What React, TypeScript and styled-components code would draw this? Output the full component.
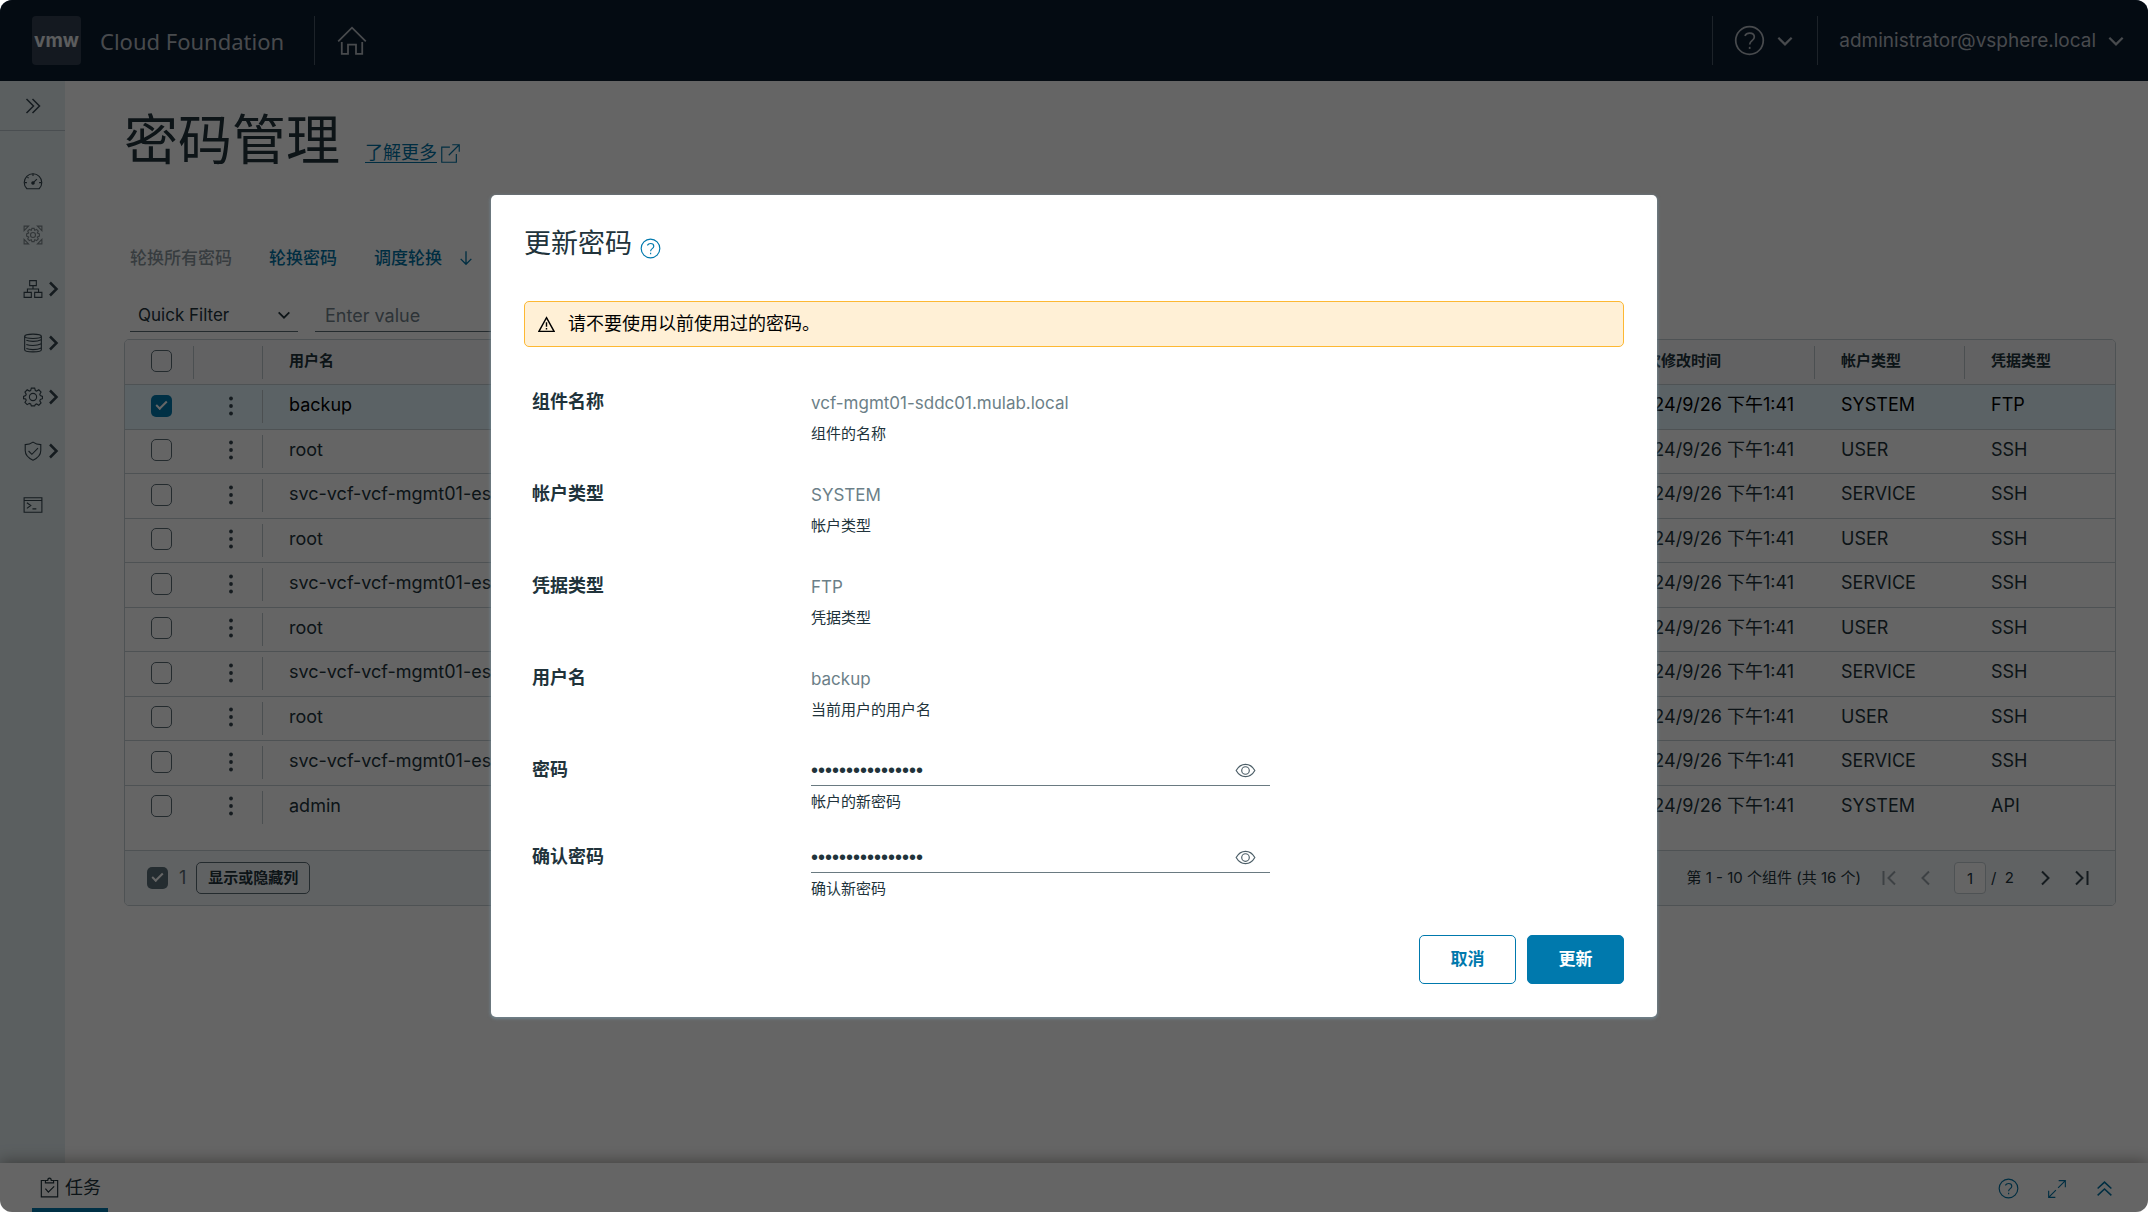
import React from 'react';
import styled, { createGlobalStyle, css } from 'styled-components';

const GlobalStyle = createGlobalStyle`
  *, *::before, *::after { box-sizing: border-box; }
  body {
    margin: 0;
    background: #ffffff;
    color: #21333b;
    font-family: Inter, 'Noto Sans CJK SC', sans-serif;
    font-size: 18px;
    line-height: 24px;
  }
  button, input, select { font: inherit; color: inherit; margin: 0; }
  button { cursor: pointer; }
  h1, h2, p { margin: 0; font-weight: 400; }
`;

/* ---------- icons ---------- */

const Svg = styled.svg<{ $size: number }>`
  display: block;
  flex: none;
  width: ${(p) => p.$size}px;
  height: ${(p) => p.$size}px;
  fill: none;
  stroke: currentColor;
`;

const shapes = {
  home: (
    <>
      <path d="M2.5 18.5 18 3l15.5 15.5" />
      <path d="M6.5 19v13.5h7V22h9v10.5h7V19" />
    </>
  ),
  help: (
    <>
      <circle cx="18" cy="18" r="16" />
      <path d="M12.6 12.6c1.2-2.2 3.2-3.2 5.6-3.2 3.2 0 5.4 1.9 5.4 4.6 0 4.2-5.4 4.2-5.4 8.6" />
      <path d="M18.2 25.4v2.4" />
    </>
  ),
  down: <path d="M6 12l12 12 12-12" />,
  right: <path d="M12 5l13 13-13 13" />,
  left: <path d="M24 5 11 18l13 13" />,
  first: <path d="M30 5 17 18l13 13M7 4v28" />,
  last: <path d="M6 5l13 13L6 31M29 4v28" />,
  doubleRight: <path d="M5 4l14 14L5 32M17 4l14 14-14 14" />,
  doubleUp: <path d="M5 18 18 6l13 12M5 31l13-12 13 12" />,
  arrowDown: <path d="M18 3v29M6 20l12 12 12-12" />,
  external: <path d="M17 7H3v26h25V19M21 3h12v12M33 3 15 21" />,
  expand: <path d="M21 3h12v12M33 3 20 16M15 33H3V21M3 33l13-13" />,
  gauge: (
    <>
      <path d="M7 32h22c3.200-3 4.800-7 4.800-11.200A15.800 15.800 0 0 0 2.200 20.800C2.200 25 3.800 29 7 32z" />
      <circle cx="18" cy="21.500" r="2.200" fill="currentColor" />
      <path d="M18 21.500l7-7M18 5v4M3 21h4M29 21h4M8 11l2 2" />
    </>
  ),
  target: (
    <>
      <path d="M2 10V2h8zM26 2h8v8zM34 26v8h-8zM10 34H2v-8z" />
      <path d="M16 6h4l1 3.500 3.500-1.500 3 3-1.700 3.300 3.700 1.700v4l-3.700 1.500L27.500 25l-3 3-3.500-1.600L20 30h-4l-1-3.600L11.500 28l-3-3 1.700-3.500L6.500 20v-4l3.700-1.700L8.500 11l3-3L15 9.500z" />
      <circle cx="18" cy="18" r="4.500" />
    </>
  ),
  network: (
    <path d="M12 3h12v9H12zM2 24h13v9H2zM21 24h13v9H21zM18 12v6M8 24v-6h20v6" />
  ),
  database: (
    <>
      <ellipse cx="18" cy="6" rx="15" ry="4" />
      <path d="M3 6v24c0 2.200 6.700 4 15 4s15-1.800 15-4V6" />
      <path d="M6 13c3 1.400 7.200 2 12 2s10-.6 15-3M6 20.500c3 1.400 7.200 2 12 2s10-.6 15-3M6 28c3 1.400 7.200 2 12 2s10-.6 15-3" />
    </>
  ),
  gear: (
    <>
      <path d="M15 2h6l1.200 4.300 2.400 1L28.500 5l4 4-2.300 4 1 2.400L35 17v4l-3.800 1.500-1 2.400 2.300 3.900-4 4-3.900-2.300-2.400 1L21 34h-6l-1.200-3.500-2.400-1-3.900 2.300-4-4 2.300-3.900-1-2.400L1 21v-4l3.800-1.600 1-2.400-2.300-4 4-4 3.900 2.300 2.400-1z" />
      <circle cx="18" cy="18" r="6.500" />
    </>
  ),
  shield: (
    <>
      <path d="M18 2c4 3 9 4.500 14 4.500V17c0 8-5.500 13.500-14 17.500C9.500 30.500 4 25 4 17V6.500C9 6.500 14 5 18 2z" />
      <path d="M10 18l6 6 11-11" />
    </>
  ),
  terminal: (
    <path d="M2 5h32v26H2zM2 10h32M7 14l7 5-7 5M17 25h7" />
  ),
  warning: (
    <>
      <path d="M18 3.500 34 32.500H2z" />
      <path d="M18 13v10M18 25.500v3" />
    </>
  ),
  eye: (
    <>
      <path d="M2 18C6 11 12 7.500 18 7.500S30 11 34 18c-4 7-10 10.500-16 10.500S6 25 2 18z" />
      <circle cx="18" cy="18" r="6.500" />
    </>
  ),
  clipboard: (
    <>
      <path d="M10 6H4v28h28V6h-6" />
      <path d="M11 10V6h4c0-2 1-4 3-4s3 2 3 4h4v4z" />
      <path d="M11 20l5 6 10-10" />
    </>
  ),
  dots: (
    <g fill="currentColor" stroke="none">
      <circle cx="18" cy="4.500" r="3.400" />
      <circle cx="18" cy="18" r="3.400" />
      <circle cx="18" cy="31.500" r="3.400" />
    </g>
  ),
};

type IconName = keyof typeof shapes;

function Icon({ name, size = 20, weight = 2 }: { name: IconName; size?: number; weight?: number }) {
  return (
    <Svg $size={size} viewBox="0 0 36 36" strokeWidth={weight} aria-hidden="true">
      {shapes[name]}
    </Svg>
  );
}

/* ---------- frame ---------- */

const Frame = styled.div`
  position: relative;
  display: flex;
  flex-direction: column;
  min-height: 100vh;
  overflow: hidden;
  border-radius: 12px;
  background: #fdfdfd;
`;

const PlainButton = styled.button`
  display: flex;
  align-items: center;
  padding: 0;
  border: 0;
  background: none;
`;

const Header = styled.header`
  display: flex;
  align-items: center;
  height: 81px;
  padding: 0 22px 0 32px;
  background: #0a1c2f;
  color: #c4c8cc;
`;

const Logo = styled.span`
  display: flex;
  align-items: center;
  justify-content: center;
  width: 49px;
  height: 49px;
  border-radius: 4px;
  background: #323f50;
  color: #e6e8ea;
  font-size: 19px;
  font-weight: 700;
`;

const Product = styled.span`
  margin: 0 30px 0 19px;
  font-family: 'Noto Sans', sans-serif;
  font-size: 22px;
  line-height: 32px;
  color: #b4bac0;
`;

const HeaderGroup = styled.div<{ $end?: number }>`
  display: flex;
  align-items: center;
  height: 49px;
  padding: 0 ${(p) => p.$end || 0}px 0 21px;
  border-left: 1px solid #4a5868;
`;

const Spacer = styled.div`
  flex: 1;
`;

const HeaderButton = styled(PlainButton)`
  gap: 10px;
  font-size: 19px;
  color: #b4bac0;
`;

const Body = styled.div`
  display: flex;
  flex: 1;
`;

const Sidebar = styled.nav`
  width: 65px;
  flex: none;
  background: #e3edf0;
  color: #35454e;
`;

const Toggle = styled(PlainButton)`
  justify-content: center;
  width: 100%;
  height: 50px;
  margin-bottom: 23px;
  border-bottom: 1px solid #b8c4ca;
`;

const NavItem = styled(PlainButton)<{ $muted?: boolean }>`
  gap: 1px;
  width: 100%;
  height: 54px;
  padding-left: 23px;
  color: ${(p) => (p.$muted ? '#7d878c' : '#35454e')};
`;

const Main = styled.main`
  flex: 1;
  min-width: 0;
  padding: 28px 32px 24px 59px;
`;

const TitleRow = styled.div`
  display: flex;
  align-items: flex-end;
  gap: 25px;
  height: 64px;
`;

const Title = styled.h1`
  font-size: 54px;
  line-height: 64px;
`;

const LearnMore = styled.a`
  display: flex;
  align-items: center;
  gap: 3px;
  margin-bottom: 8px;
  color: #0072a3;
  text-underline-offset: 3px;
`;

const Actions = styled.div`
  display: flex;
  align-items: center;
  gap: 37px;
  height: 34px;
  margin: 68px 0 24px 6px;
`;

const Action = styled(PlainButton)`
  gap: 16px;
  font-size: 17px;
  font-weight: 500;
  color: #0072a3;
  &:disabled { color: #8b979d; }
`;

const Filters = styled.div`
  display: flex;
  gap: 17px;
  margin: 0 0 7px 6px;
`;

const controlLine = css`
  height: 33px;
  border: 0;
  border-bottom: 1px solid #5b6b74;
  border-radius: 0;
  background: transparent;
  outline: 0;
`;

const SelectWrap = styled.span`
  display: grid;
  grid-template-columns: 1fr 22px;
  align-items: center;
  width: 168px;
  ${controlLine}
  & > select { grid-area: 1 / 1 / 2 / 3; }
  & > svg { grid-area: 1 / 2; pointer-events: none; }
`;

const FilterSelect = styled.select`
  width: 100%;
  height: 32px;
  padding: 0 8px;
  border: 0;
  background: transparent;
  appearance: none;
  outline: 0;
  font-size: 17px;
`;

const FilterInput = styled.input`
  ${controlLine}
  width: 260px;
  padding: 0 10px;
  &::placeholder { color: #71808a; opacity: 1; }
`;

/* ---------- data grid ---------- */

const Grid = styled.section`
  border: 1px solid #c3ccd1;
  border-radius: 5px;
  overflow: hidden;
`;

const Table = styled.table`
  width: 100%;
  height: 489px;
  table-layout: fixed;
  border-collapse: separate;
  border-spacing: 0;
`;

const Col = styled.col<{ $width?: number }>`
  width: ${(p) => (p.$width ? `${p.$width}px` : 'auto')};
`;

const divider = css`
  background-image: linear-gradient(#bcc5ca, #bcc5ca);
  background-size: 1px 33px;
  background-position: right center;
  background-repeat: no-repeat;
`;

const cellBox = css`
  height: 44px;
  padding: 0 0 2px 26px;
  text-align: left;
  white-space: nowrap;
  vertical-align: middle;
`;

const Th = styled.th<{ $divided?: boolean }>`
  ${cellBox}
  background-color: #f4f6f8;
  font-size: 15px;
  font-weight: 700;
  line-height: 20px;
  ${(p) => p.$divided && divider}
`;

const Td = styled.td<{ $divided?: boolean }>`
  ${cellBox}
  border-top: 1px solid #c3ccd1;
  ${(p) => p.$divided && divider}
`;

const TextTd = styled(Td)`
  padding-bottom: 3px;
`;

const Tr = styled.tr<{ $selected?: boolean }>`
  color: ${(p) => (p.$selected ? '#000000' : '#21333b')};
  background: ${(p) => (p.$selected ? '#e3f5fc' : 'transparent')};
`;

const Check = styled.input<{ $tone?: string }>`
  display: block;
  appearance: none;
  width: 21px;
  height: 22px;
  flex: none;
  border: 1px solid #5b6b74;
  border-radius: 5px;
  position: relative;
  &:checked {
    border: 0;
    background: ${(p) => p.$tone || '#0079ad'};
  }
  &:checked::after {
    content: '';
    position: absolute;
    left: 5px;
    top: 6px;
    width: 11px;
    height: 6px;
    border-left: 2px solid #ffffff;
    border-bottom: 2px solid #ffffff;
    transform: rotate(-45deg);
  }
`;

const RowMenu = styled(PlainButton)`
  justify-content: center;
  width: 22px;
  height: 24px;
  color: #35454e;
`;

const GridFooter = styled.footer`
  display: flex;
  align-items: center;
  height: 55px;
  margin-top: 21px;
  padding: 0 24px 0 22px;
  border-top: 1px solid #c3ccd1;
  background: #f1f5f8;
  font-size: 15px;
`;

const Selected = styled.label`
  display: flex;
  align-items: center;
  gap: 11px;
  margin-right: 10px;
  font-size: 18px;
  color: #5b6b74;
`;

const ColumnsButton = styled.button`
  height: 32px;
  padding: 0 11px;
  border: 1px solid #5b6b74;
  border-radius: 5px;
  background: transparent;
  font-weight: 700;
  line-height: 20px;
`;

const Pager = styled.div`
  display: flex;
  align-items: center;
  gap: 19px;
`;

const PageButton = styled(PlainButton)`
  color: #35454e;
  &:disabled { color: #9aa4aa; }
`;

const PageField = styled.label`
  display: flex;
  align-items: center;
  gap: 5px;
  margin-right: 3px;
`;

const PageInput = styled.input`
  width: 32px;
  height: 32px;
  padding: 0;
  border: 1px solid #c3ccd1;
  border-radius: 4px;
  background: #fdfdfd;
  text-align: center;
`;

/* ---------- task bar ---------- */

const TaskBar = styled.footer`
  display: flex;
  align-items: center;
  height: 49px;
  padding: 0 34px 0 32px;
  background: #fdfdfd;
  box-shadow: 0 -2px 14px rgba(40, 30, 20, 0.4);
  color: #0072a3;
`;

const TaskTab = styled(PlainButton)`
  gap: 5px;
  align-self: stretch;
  padding: 0 7px;
  border-top: 4px solid transparent;
  border-bottom: 4px solid #0079ad;
  color: #21333b;
`;

const TaskTools = styled.div`
  display: flex;
  gap: 28px;
  margin-left: auto;
  padding-top: 2px;
  & > button { color: inherit; }
`;

/* ---------- dialog ---------- */

const Backdrop = styled.div`
  position: absolute;
  inset: 0;
  display: flex;
  align-items: center;
  justify-content: center;
  background: rgba(0, 0, 0, 0.6);
`;

const Dialog = styled.form`
  width: 1166px;
  max-width: 92%;
  padding: 31px 33px 33px;
  border-radius: 5px;
  background: #ffffff;
  box-shadow: 0 1px 3px 1px rgba(120, 150, 165, 0.6);
`;

const DialogTitle = styled.div`
  display: flex;
  align-items: center;
  gap: 8px;
  height: 36px;
  & > h2 { font-size: 27px; line-height: 36px; }
  & > button { color: #0079ad; padding-top: 9px; }
`;

const Alert = styled.div`
  display: flex;
  align-items: center;
  gap: 13px;
  height: 46px;
  margin: 39px 0 43px;
  padding: 0 13px;
  border: 1px solid #fdb833;
  border-radius: 5px;
  background: #fff0d6;
  color: #000000;
`;

const Fields = styled.div<{ $gap: number }>`
  display: flex;
  flex-direction: column;
  gap: ${(p) => p.$gap}px;
  margin-bottom: 38px;
`;

const SecretFields = styled(Fields)`
  margin-bottom: 36px;
`;

const Field = styled.div`
  display: grid;
  grid-template-columns: 279px 459px;
  height: 54px;
  padding-left: 8px;
`;

const FieldLabel = styled.label`
  font-weight: 700;
`;

const FieldBody = styled.div`
  display: flex;
  flex-direction: column;
  justify-content: space-between;
`;

const Value = styled.output`
  font-size: 17px;
  line-height: 26px;
  color: #6c7f88;
`;

const Hint = styled.p`
  font-size: 15px;
  line-height: 20px;
`;

const SecretLine = styled.div`
  display: flex;
  align-items: flex-start;
  height: 28px;
  padding-right: 14px;
  border-bottom: 1px solid #6a7a81;
  & > button { height: 24px; color: #4d5f68; }
`;

const SecretInput = styled.input`
  flex: 1;
  height: 24px;
  padding: 0;
  border: 0;
  outline: 0;
  background: transparent;
  font-family: 'Liberation Sans', sans-serif;
  font-size: 20px;
`;

const DialogActions = styled.div`
  display: flex;
  justify-content: flex-end;
  gap: 11px;
`;

const DialogButton = styled.button<{ $primary?: boolean }>`
  width: 97px;
  height: 49px;
  padding: 0 0 2px;
  border: 1px solid #0079ad;
  border-radius: 5px;
  background: ${(p) => (p.$primary ? '#0079ad' : '#ffffff')};
  color: ${(p) => (p.$primary ? '#ffffff' : '#0079ad')};
  font-size: 17px;
  font-weight: 700;
`;

/* ---------- data ---------- */

const nav: { icon: IconName; label: string; more?: boolean; muted?: boolean }[] = [
  { icon: 'gauge', label: 'dashboard' },
  { icon: 'target', label: 'solutions', muted: true },
  { icon: 'network', label: 'inventory', more: true },
  { icon: 'database', label: 'lifecycle', more: true },
  { icon: 'gear', label: 'administration', more: true },
  { icon: 'shield', label: 'security', more: true },
  { icon: 'terminal', label: 'developer center' },
];

const accounts = [
  ['backup', 'SYSTEM', 'FTP'],
  ['root', 'USER', 'SSH'],
  ['svc-vcf-vcf-mgmt01-esxi01', 'SERVICE', 'SSH'],
  ['root', 'USER', 'SSH'],
  ['svc-vcf-vcf-mgmt01-esxi02', 'SERVICE', 'SSH'],
  ['root', 'USER', 'SSH'],
  ['svc-vcf-vcf-mgmt01-esxi03', 'SERVICE', 'SSH'],
  ['root', 'USER', 'SSH'],
  ['svc-vcf-vcf-mgmt01-esxi04', 'SERVICE', 'SSH'],
  ['admin', 'SYSTEM', 'API'],
];

const details = [
  { id: 'component', label: '组件名称', value: 'vcf-mgmt01-sddc01.mulab.local', hint: '组件的名称' },
  { id: 'account', label: '帐户类型', value: 'SYSTEM', hint: '帐户类型' },
  { id: 'credential', label: '凭据类型', value: 'FTP', hint: '凭据类型' },
  { id: 'user', label: '用户名', value: 'backup', hint: '当前用户的用户名' },
];

const secrets = [
  { id: 'password', label: '密码', hint: '帐户的新密码' },
  { id: 'confirm', label: '确认密码', hint: '确认新密码' },
];

function AccountTable() {
  return (
    <Table>
      <colgroup>
        <Col $width={69} />
        <Col $width={69} />
        <Col />
        <Col $width={210} />
        <Col $width={150} />
        <Col $width={150} />
      </colgroup>
      <thead>
        <tr>
          <Th $divided><Check type="checkbox" aria-label="select all" /></Th>
          <Th $divided />
          <Th>用户名</Th>
          <Th $divided>上次修改时间</Th>
          <Th $divided>帐户类型</Th>
          <Th>凭据类型</Th>
        </tr>
      </thead>
      <tbody>
        {accounts.map(([user, type, credential], i) => (
          <Tr key={i} $selected={i === 0}>
            <Td><Check type="checkbox" defaultChecked={i === 0} aria-label={user} /></Td>
            <Td $divided><RowMenu type="button" aria-label="actions"><Icon name="dots" size={20} /></RowMenu></Td>
            <TextTd>{user}</TextTd>
            <TextTd>2024/9/26 下午1:41</TextTd>
            <TextTd>{type}</TextTd>
            <TextTd>{credential}</TextTd>
          </Tr>
        ))}
      </tbody>
    </Table>
  );
}

function UpdateDialog() {
  return (
    <Backdrop>
      <Dialog role="dialog" aria-modal="true" aria-labelledby="dialog-title" onSubmit={(e) => e.preventDefault()}>
        <DialogTitle>
          <h2 id="dialog-title">更新密码</h2>
          <PlainButton type="button" aria-label="help"><Icon name="help" size={21} /></PlainButton>
        </DialogTitle>
        <Alert role="alert">
          <Icon name="warning" size={17} weight={3} />
          请不要使用以前使用过的密码。
        </Alert>
        <Fields $gap={38}>
          {details.map((d) => (
            <Field key={d.id}>
              <FieldLabel htmlFor={d.id}>{d.label}</FieldLabel>
              <FieldBody>
                <Value id={d.id}>{d.value}</Value>
                <Hint>{d.hint}</Hint>
              </FieldBody>
            </Field>
          ))}
        </Fields>
        <SecretFields $gap={33}>
          {secrets.map((s) => (
            <Field key={s.id}>
              <FieldLabel htmlFor={s.id}>{s.label}</FieldLabel>
              <FieldBody>
                <SecretLine>
                  <SecretInput id={s.id} type="password" defaultValue={'x'.repeat(16)} autoComplete="new-password" />
                  <PlainButton type="button" aria-label="show"><Icon name="eye" size={21} /></PlainButton>
                </SecretLine>
                <Hint>{s.hint}</Hint>
              </FieldBody>
            </Field>
          ))}
        </SecretFields>
        <DialogActions>
          <DialogButton type="button">取消</DialogButton>
          <DialogButton type="submit" $primary>更新</DialogButton>
        </DialogActions>
      </Dialog>
    </Backdrop>
  );
}

export default function App() {
  return (
    <>
      <GlobalStyle />
      <Frame>
        <Header>
          <Logo>vmw</Logo>
          <Product>Cloud Foundation</Product>
          <HeaderGroup>
            <HeaderButton type="button" aria-label="home"><Icon name="home" size={32} weight={2} /></HeaderButton>
          </HeaderGroup>
          <Spacer />
          <HeaderGroup $end={22}>
            <HeaderButton type="button" aria-label="help">
              <Icon name="help" size={31} />
              <Icon name="down" size={20} weight={4} />
            </HeaderButton>
          </HeaderGroup>
          <HeaderGroup>
            <HeaderButton type="button">
              administrator@vsphere.local
              <Icon name="down" size={20} weight={4} />
            </HeaderButton>
          </HeaderGroup>
        </Header>
        <Body>
          <Sidebar>
            <Toggle type="button" aria-label="expand"><Icon name="doubleRight" size={18} weight={3} /></Toggle>
            {nav.map((n) => (
              <NavItem key={n.icon} type="button" $muted={n.muted} aria-label={n.label}>
                <Icon name={n.icon} size={20} weight={2} />
                {n.more && <Icon name="right" size={18} weight={5} />}
              </NavItem>
            ))}
          </Sidebar>
          <Main>
            <TitleRow>
              <Title>密码管理</Title>
              <LearnMore href="#learn-more">了解更多<Icon name="external" size={21} /></LearnMore>
            </TitleRow>
            <Actions>
              <Action type="button" disabled>轮换所有密码</Action>
              <Action type="button">轮换密码</Action>
              <Action type="button">调度轮换<Icon name="arrowDown" size={16} weight={3} /></Action>
            </Actions>
            <Filters>
              <SelectWrap>
                <FilterSelect aria-label="Quick Filter"><option>Quick Filter</option></FilterSelect>
                <Icon name="down" size={16} weight={4} />
              </SelectWrap>
              <FilterInput type="text" placeholder="Enter value" aria-label="Enter value" />
            </Filters>
            <Grid>
              <AccountTable />
              <GridFooter>
                <Selected>
                  <Check type="checkbox" defaultChecked $tone="#5b6f79" />1
                </Selected>
                <ColumnsButton type="button">显示或隐藏列</ColumnsButton>
                <Spacer />
                <Pager>
                  <span>第 1 - 10 个组件 (共 16 个)</span>
                  <PageButton type="button" disabled aria-label="first"><Icon name="first" size={18} weight={4} /></PageButton>
                  <PageButton type="button" disabled aria-label="previous"><Icon name="left" size={18} weight={4} /></PageButton>
                  <PageField><PageInput type="text" defaultValue="1" aria-label="page" />/ &nbsp;2</PageField>
                  <PageButton type="button" aria-label="next"><Icon name="right" size={18} weight={4} /></PageButton>
                  <PageButton type="button" aria-label="last"><Icon name="last" size={18} weight={4} /></PageButton>
                </Pager>
              </GridFooter>
            </Grid>
          </Main>
        </Body>
        <TaskBar>
          <TaskTab type="button"><Icon name="clipboard" size={21} weight={2} />任务</TaskTab>
          <TaskTools>
            <PlainButton type="button" aria-label="help"><Icon name="help" size={21} /></PlainButton>
            <PlainButton type="button" aria-label="expand"><Icon name="expand" size={20} weight={2} /></PlainButton>
            <PlainButton type="button" aria-label="open"><Icon name="doubleUp" size={19} weight={3} /></PlainButton>
          </TaskTools>
        </TaskBar>
        <UpdateDialog />
      </Frame>
    </>
  );
}
